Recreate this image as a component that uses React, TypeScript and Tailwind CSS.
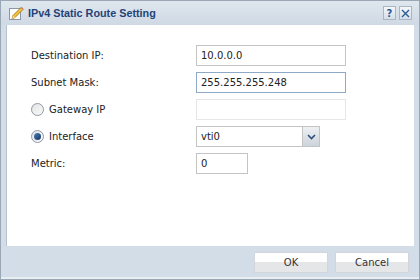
import { useState } from "react";

const font = { fontFamily: '"DejaVu Sans", Verdana, sans-serif' };

const PencilIcon = () => (
  <svg width="16" height="16" viewBox="0 0 16 16">
    <rect x="1.5" y="3.5" width="11" height="11" fill="#fff" stroke="#8a97a8" />
    <path d="M4 14 L5 10.5 L13 2.5 L15 4.5 L7 12.5 Z" fill="#f2c23b" stroke="#9a6b12" strokeWidth="0.8" />
    <path d="M4 14 L5 10.5 L7 12.5 Z" fill="#f3dcaa" />
    <path d="M13 2.5 L15 4.5 L15.6 3.9 L13.6 1.9 Z" fill="#d66" />
  </svg>
);

const Radio = ({ checked }: { checked: boolean }) => (
  <span className="relative flex items-center justify-center w-[13px] h-[13px] rounded-full border border-[#8e98a4] bg-gradient-to-br from-[#e4e4e4] to-[#fafafa]">
    {checked && (
      <span className="w-[7px] h-[7px] rounded-full bg-gradient-to-br from-[#4a7fc0] to-[#17355f]" />
    )}
  </span>
);

const Row = ({ label, children }: { label: React.ReactNode; children: React.ReactNode }) => (
  <div className="flex items-center h-[21px]">
    <div className="w-[189px] pl-[24px] flex items-center text-[#222]">{label}</div>
    {children}
  </div>
);

export default function App() {
  const [mode] = useState("interface");
  return (
    <div
      className="w-[420px] h-[280px] flex flex-col bg-[#d3dde8] border border-[#9aa7b5] text-[10px]"
      style={font}
    >
      {/* title */}
      <div className="h-[24px] flex items-center px-[7px] bg-gradient-to-b from-[#dfe6ee] to-[#cfd9e4]">
        <PencilIcon />
        <span
          className="ml-[4px] text-[10.8px] font-bold text-[#1e4478]"
          style={{ fontFamily: '"Liberation Sans", Arial, sans-serif' }}
        >
          IPv4 Static Route Setting
        </span>
        <div className="ml-auto flex gap-[3px]">
          <span className="w-[13px] h-[14px] flex items-center justify-center border border-[#aab6c4] bg-gradient-to-b from-[#f4f7fa] to-[#d6dee8] text-[10px] font-bold text-[#2c5a94]">?</span>
          <span className="w-[13px] h-[14px] flex items-center justify-center border border-[#aab6c4] bg-gradient-to-b from-[#f4f7fa] to-[#d6dee8]">
            <svg width="9" height="9" viewBox="0 0 9 9">
              <path d="M1 1 L8 8 M8 1 L1 8" stroke="#2c5a94" strokeWidth="1.4" />
            </svg>
          </span>
        </div>
      </div>

      {/* body */}
      <div className="flex-1 mx-[5px] bg-white border-l border-[#b7c2ce] pt-[20px] flex flex-col gap-[6px]">
        <Row label="Destination IP:">
          <div className="w-[150px] h-[21px] border border-[#c4c4c4] flex items-center px-[4px] text-[#222]">10.0.0.0</div>
        </Row>
        <Row label="Subnet Mask:">
          <div className="w-[150px] h-[21px] border border-[#8ea8c8] flex items-center px-[4px] text-[#222]">255.255.255.248</div>
        </Row>
        <Row
          label={
            <>
              <Radio checked={mode === "gateway"} />
              <span className="ml-[5px]">Gateway IP</span>
            </>
          }
        >
          <div className="w-[150px] h-[21px] border border-[#e6e6e6]" />
        </Row>
        <Row
          label={
            <>
              <Radio checked={mode === "interface"} />
              <span className="ml-[5px]">Interface</span>
            </>
          }
        >
          <div className="w-[124px] h-[21px] border border-[#c4c4c4] flex items-center">
            <span className="flex-1 px-[4px] text-[#222]">vti0</span>
            <span className="w-[17px] h-full flex items-center justify-center border-l border-[#c4c4c4] bg-gradient-to-b from-[#eef1f4] to-[#cdd3da]">
              <svg width="9" height="6" viewBox="0 0 9 6">
                <path d="M1 1 L4.5 4.5 L8 1" fill="none" stroke="#2c4f80" strokeWidth="1.6" />
              </svg>
            </span>
          </div>
        </Row>
        <Row label="Metric:">
          <div className="w-[52px] h-[21px] border border-[#c4c4c4] flex items-center px-[4px] text-[#222]">0</div>
        </Row>
      </div>

      {/* footer */}
      <div className="h-[33px] flex items-start justify-end gap-[7px] pt-[6px] pr-[10px] border-b-2 border-[#e9eef3]">
        <button className="w-[74px] h-[21px] border border-[#d0d6dc] bg-gradient-to-b from-white from-50% to-[#e4e6e8] to-50% text-[#333]">OK</button>
        <button className="w-[74px] h-[21px] border border-[#d0d6dc] bg-gradient-to-b from-white from-50% to-[#e4e6e8] to-50% text-[#333]">Cancel</button>
      </div>
    </div>
  );
}
